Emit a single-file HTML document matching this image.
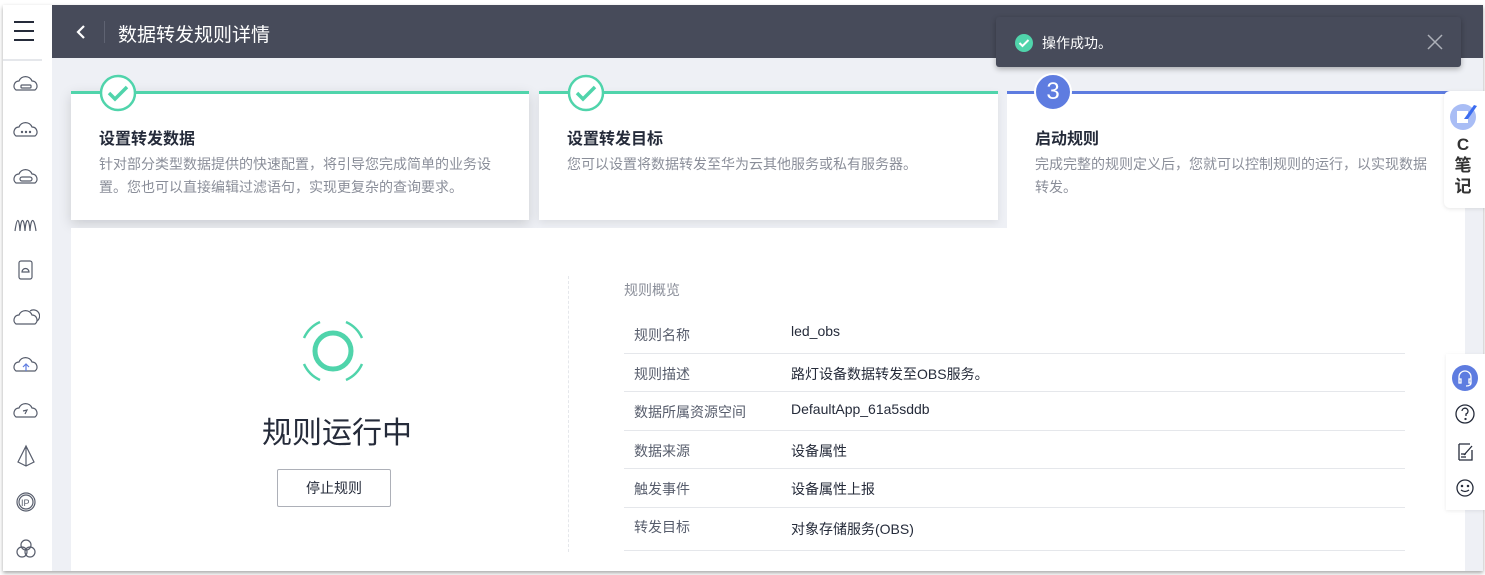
<!DOCTYPE html>
<html><head><meta charset="utf-8">
<style>
*{margin:0;padding:0;box-sizing:border-box}
body{width:1485px;height:575px;position:relative;overflow:hidden;background:#fff;font-family:"Liberation Sans","Noto Sans CJK SC",sans-serif;}
.a{position:absolute}
.frame{left:3px;top:5px;width:1480px;height:566px;background:#eef0f5;box-shadow:0 2px 4px rgba(0,0,0,.35);}
.side{left:3px;top:5px;width:49px;height:566px;background:#fff;}
.hdr{left:52px;top:5px;width:1431px;height:53px;background:#474b5a;}
.card{background:#fff;box-shadow:0 3px 8px rgba(0,0,0,.08)}
.ttl{font-size:16px;font-weight:bold;color:#252b3a}
.desc{font-size:14px;color:#8a8e99;line-height:23px}
.lbl{font-size:14px;color:#575d6c}
.val{font-size:14px;color:#252b3a}
.line{height:1px;background:#e5e7eb;left:624px;width:781px}
</style></head><body>
<div class="a frame"></div>
<div class="a side"></div>
<div class="a" style="left:14px;top:21px;width:20px;height:2px;background:#252b3a"></div>
<div class="a" style="left:14px;top:30px;width:20px;height:2px;background:#252b3a"></div>
<div class="a" style="left:14px;top:39px;width:20px;height:2px;background:#252b3a"></div>
<div class="a" style="left:3px;top:59px;width:39px;height:2px;background:#e5e7eb"></div>
<svg class="a" style="left:12px;top:70px" width="28" height="490" fill="none" stroke="#575d6c" stroke-width="1.2">
 <g><path d="M4 20a5 5 0 0 1 3-9 7 7 0 0 1 13 0 5 5 0 0 1 3 9z"/><rect x="9" y="15" width="10" height="3" rx="1"/></g>
 <g transform="translate(0,46)"><path d="M4 20a5 5 0 0 1 3-9 7 7 0 0 1 13 0 5 5 0 0 1 3 9z"/><circle cx="10" cy="16" r=".6"/><circle cx="14" cy="16" r=".6"/><circle cx="18" cy="16" r=".6"/></g>
 <g transform="translate(0,93)"><path d="M4 20a5 5 0 0 1 3-9 7 7 0 0 1 13 0 5 5 0 0 1 3 9z"/><rect x="8" y="14" width="12" height="4" rx="2"/></g>
 <g transform="translate(0,139)"><path d="M3 22c2-14 4-14 5 0c1-14 4-14 5 0c1-14 4-14 5 0c1-14 4-14 6 0"/></g>
 <g transform="translate(0,186)"><rect x="7" y="5" width="13" height="18" rx="2"/><path d="M10 16a3 3 0 0 1 7 0z"/></g>
 <g transform="translate(0,232)"><path d="M4 22a5 5 0 0 1 3-9 7 7 0 0 1 13 0 5 5 0 0 1 3 9z"/><path d="M18 9a6 6 0 0 1 7 10"/></g>
 <g transform="translate(0,279)"><path d="M4 22a5 5 0 0 1 3-9 7 7 0 0 1 13 0 5 5 0 0 1 3 9z"/><path d="M14 22v-7m-3 3l3-3 3 3" stroke="#5e7ce0"/></g>
 <g transform="translate(0,325)"><path d="M4 22a5 5 0 0 1 3-9 7 7 0 0 1 13 0 5 5 0 0 1 3 9z"/><path d="M11 16l4-1-2 4"/></g>
 <g transform="translate(0,372)"><path d="M14 4l-8 16 8 4 8-4z M14 4v20"/></g>
 <g transform="translate(0,418)"><circle cx="14" cy="14" r="9"/><circle cx="14" cy="14" r="7"/><text x="9" y="18" font-size="9" fill="#575d6c" stroke="none" font-family="Liberation Sans">IP</text></g>
 <g transform="translate(0,465)"><circle cx="14" cy="10" r="5"/><circle cx="10" cy="17" r="5"/><circle cx="18" cy="17" r="5"/></g>
</svg>
<div class="a hdr"></div>
<svg class="a" style="left:74px;top:24px" width="14" height="16"><path d="M10 2L4 8l6 6" stroke="#fff" stroke-width="2.2" fill="none"/></svg>
<div class="a" style="left:104px;top:21px;width:1px;height:22px;background:#5f6372"></div>
<div class="a" style="left:118px;top:20px;font-size:19px;color:#fff">数据转发规则详情</div>

<div class="a card" style="left:71px;top:91px;width:458px;height:129px;border-top:3px solid #50d4ab;box-shadow:0 4px 12px rgba(0,0,0,.15)"></div>
<div class="a card" style="left:539px;top:91px;width:459px;height:129px;border-top:3px solid #50d4ab"></div>
<div class="a" style="left:71px;top:228px;width:1394px;height:343px;background:#fff"></div>
<div class="a" style="left:1007px;top:91px;width:458px;height:145px;background:#fff;border-top:3px solid #5e7ce0"></div>

<svg class="a" style="left:98px;top:73px" width="40" height="40"><circle cx="20" cy="20" r="17" fill="#fff" stroke="#50d4ab" stroke-width="2.5"/><path d="M11 20l6 6 12-12" stroke="#50d4ab" stroke-width="3.5" fill="none"/></svg>
<svg class="a" style="left:566px;top:73px" width="40" height="40"><circle cx="20" cy="20" r="17" fill="#fff" stroke="#50d4ab" stroke-width="2.5"/><path d="M11 20l6 6 12-12" stroke="#50d4ab" stroke-width="3.5" fill="none"/></svg>
<div class="a" style="left:1034px;top:73px;width:38px;height:38px;border-radius:50%;background:#5e7ce0;border:2px solid #fff;color:#fff;font-size:24px;text-align:center;line-height:34px">3</div>

<div class="a ttl" style="left:99px;top:125px">设置转发数据</div>
<div class="a desc" style="left:99px;top:153px;width:418px">针对部分类型数据提供的快速配置，将引导您完成简单的业务设置。您也可以直接编辑过滤语句，实现更复杂的查询要求。</div>
<div class="a ttl" style="left:567px;top:125px">设置转发目标</div>
<div class="a desc" style="left:567px;top:153px">您可以设置将数据转发至华为云其他服务或私有服务器。</div>
<div class="a ttl" style="left:1035px;top:125px">启动规则</div>
<div class="a desc" style="left:1035px;top:153px;width:400px">完成完整的规则定义后，您就可以控制规则的运行，以实现数据转发。</div>

<div class="a" style="left:996px;top:17px;width:465px;height:50px;background:#474b5a;border-radius:3px;box-shadow:0 2px 6px rgba(0,0,0,.3)"></div>
<svg class="a" style="left:1014px;top:33px" width="20" height="20"><circle cx="10" cy="10" r="9" fill="#50d4ab"/><path d="M5.5 10l3 3 6-6" stroke="#fff" stroke-width="2" fill="none"/></svg>
<div class="a" style="left:1042px;top:33px;font-size:14px;color:#fff">操作成功。</div>
<svg class="a" style="left:1427px;top:34px" width="16" height="16"><path d="M1 1l14 14M15 1L1 15" stroke="#adb0b8" stroke-width="1.5"/></svg>

<div class="a" style="left:1444px;top:91px;width:41px;height:117px;background:#fff;border-radius:6px 0 0 6px;box-shadow:0 1px 4px rgba(0,0,0,.1)"></div>
<svg class="a" style="left:1449px;top:101px" width="30" height="30"><circle cx="14" cy="16" r="13" fill="#a9bdf5"/><rect x="8" y="10" width="11" height="12" fill="#fff"/><path d="M15 18l10-14 3 1-9 13z" fill="#3b6cf0"/></svg>
<div class="a" style="left:1452px;top:134px;font-size:17px;font-weight:bold;color:#333;line-height:21px;width:22px;text-align:center">C<br>笔<br>记</div>

<div class="a" style="left:1446px;top:354px;width:39px;height:156px;background:#fff;box-shadow:0 1px 4px rgba(0,0,0,.08)"></div>
<svg class="a" style="left:1451px;top:364px" width="30" height="140" fill="none" stroke="#252b3a" stroke-width="1.3">
 <circle cx="14" cy="14" r="13" fill="#5e7ce0" stroke="none"/>
 <path d="M8 17v-4a6 6 0 0 1 12 0v4M8 15h2v4H8zM18 15h2v4h-2zM20 19q0 3-5 3" stroke="#fff"/>
 <circle cx="14" cy="50" r="9"/><path d="M11 47a3 3 0 1 1 4 3v2"/><circle cx="14.5" cy="55" r=".5"/>
 <path d="M8 80h11M8 96h13v-10M8 80v16M10 90h5M10 93h5M13 91l8-9"/>
 <circle cx="14" cy="124" r="8"/><circle cx="11" cy="122" r=".6"/><circle cx="17" cy="122" r=".6"/><path d="M10 126q4 3 8 0"/>
</svg>

<svg class="a" style="left:298px;top:316px" width="70" height="70" fill="none" stroke="#50d4ab" stroke-width="2.5">
 <circle cx="35" cy="35" r="18" stroke-width="5"/>
 <path d="M22 6A32 32 0 0 0 6 22M48 6a32 32 0 0 1 16 16M64 48a32 32 0 0 1-16 16M22 64A32 32 0 0 1 6 48"/>
</svg>
<div class="a" style="left:262px;top:408px;font-size:30px;color:#252b3a">规则运行中</div>
<div class="a" style="left:277px;top:469px;width:114px;height:38px;border:1px solid #adb0b8;border-radius:2px;font-size:14px;color:#252b3a;text-align:center;line-height:36px">停止规则</div>
<div class="a" style="left:568px;top:276px;height:276px;border-left:1px dashed #e5e7eb"></div>

<div class="a" style="left:624px;top:280px;font-size:14px;color:#8a8e99">规则概览</div>
<div class="a lbl" style="left:634px;top:325px">规则名称</div><div class="a val" style="left:791px;top:323px">led_obs</div>
<div class="a line" style="top:353px"></div>
<div class="a lbl" style="left:634px;top:364px">规则描述</div><div class="a val" style="left:791px;top:364px">路灯设备数据转发至OBS服务。</div>
<div class="a line" style="top:391px"></div>
<div class="a lbl" style="left:634px;top:402px">数据所属资源空间</div><div class="a val" style="left:791px;top:401px">DefaultApp_61a5sddb</div>
<div class="a line" style="top:430px"></div>
<div class="a lbl" style="left:634px;top:441px">数据来源</div><div class="a val" style="left:791px;top:441px">设备属性</div>
<div class="a line" style="top:468px"></div>
<div class="a lbl" style="left:634px;top:479px">触发事件</div><div class="a val" style="left:791px;top:479px">设备属性上报</div>
<div class="a line" style="top:507px"></div>
<div class="a lbl" style="left:634px;top:517px">转发目标</div><div class="a val" style="left:791px;top:519px">对象存储服务(OBS)</div>
<div class="a line" style="top:550px"></div>
</body></html>
